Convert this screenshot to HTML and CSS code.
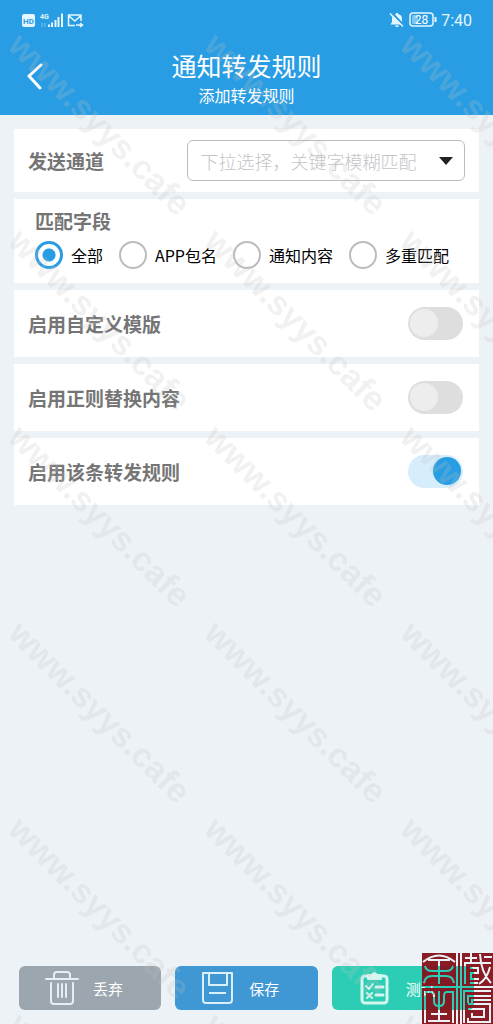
FILE: index.html
```
<!DOCTYPE html>
<html lang="zh-CN">
<head>
  <meta charset="UTF-8">
  <meta name="viewport" content="width=device-width, initial-scale=1">
  <title>通知转发规则</title>
  <link rel="stylesheet" href="styles.css">
</head>
<body>
<header class="header">
  <div class="status-bar">
    <svg class="status-left" width="64" height="18" viewBox="0 0 64 18" aria-hidden="true">
      <rect x="1" y="3" width="13" height="13" rx="2" fill="#e4f6ff"/>
      <text x="7.500" y="12.500" class="hd" text-anchor="middle">HD</text>
      <text x="19" y="8" class="net">4G</text>
      <path d="M21 12v4M24 12v4" stroke="#7cc5f0" stroke-width="1"/>
      <path d="M28 13.500v2.500M31 11.500v4.500M34.500 9v7M37.500 6v10M41 2.500v13.500" stroke="#e4f6ff" stroke-width="2"/>
      <path d="M54 14.500h-6.500V4H60v6M47.500 4.500l6.300 5.500L60 4.500M55 14h6M59 12l2.500 2-2.500 2" fill="none" stroke="#e4f6ff" stroke-width="1.500"/>
    </svg>
    <div class="status-right">
      <svg width="16" height="18" viewBox="0 0 16 18" aria-hidden="true">
        <path d="M7 2h2v1c3 .5 4 2.500 4 5v3l1.500 2.500h-13L3 11V8c0-2.500 1-4.500 4-5zM6 14.500h4c-.5 2-3.500 2-4 0z" fill="#e4f6ff"/>
        <path d="M3 2l12 12.500" stroke="#299de3" stroke-width="2"/>
        <path d="M1 2.500l13 13" stroke="#e4f6ff" stroke-width="1.500"/>
      </svg>
      <svg width="28" height="18" viewBox="0 0 28 18" aria-hidden="true">
        <rect x="1" y="2" width="23" height="13" rx="3" fill="none" stroke="#e4f6ff" stroke-width="1.500"/>
        <rect x="3" y="4" width="6" height="9" rx="1" fill="#7cc5f0"/>
        <path d="M26.500 6v5" stroke="#e4f6ff" stroke-width="2"/>
        <text x="12.500" y="12.500" class="battery" text-anchor="middle">28</text>
      </svg>
      <span class="clock">7:40</span>
    </div>
  </div>
  <div class="title-bar">
    <button class="back" type="button" aria-label="返回">
      <svg width="18" height="28" viewBox="0 0 18 28"><path d="M15 2L3 13l11 12" fill="none" stroke="#fff" stroke-width="3" stroke-linecap="round" stroke-linejoin="round"/></svg>
    </button>
    <div class="titles">
      <h1 class="title">通知转发规则</h1>
      <p class="subtitle">添加转发规则</p>
    </div>
  </div>
</header>

<main class="content">
  <div class="card row">
    <label class="label" for="channel">发送通道</label>
    <div class="select-box">
      <select id="channel" class="select">
        <option>下拉选择，关键字模糊匹配</option>
      </select>
      <svg class="caret" width="14" height="8" viewBox="0 0 14 8" aria-hidden="true"><path d="M0 0h14L7 8z" fill="#222"/></svg>
    </div>
  </div>

  <fieldset class="card fields">
    <legend class="label legend">匹配字段</legend>
    <div class="radios">
      <label class="radio"><input type="radio" name="field" checked>全部</label>
      <label class="radio"><input type="radio" name="field">APP包名</label>
      <label class="radio"><input type="radio" name="field">通知内容</label>
      <label class="radio"><input type="radio" name="field">多重匹配</label>
    </div>
  </fieldset>

  <div class="card row">
    <label class="label" for="tpl">启用自定义模版</label>
    <input class="switch" type="checkbox" id="tpl">
  </div>
  <div class="card row">
    <label class="label" for="regex">启用正则替换内容</label>
    <input class="switch" type="checkbox" id="regex">
  </div>
  <div class="card row">
    <label class="label" for="enabled">启用该条转发规则</label>
    <input class="switch" type="checkbox" id="enabled" checked>
  </div>
</main>

<footer class="actions">
  <button class="btn btn-discard" type="button">
    <svg width="34" height="34" viewBox="0 0 34 34" fill="none" stroke="#e8edf2" stroke-width="2" stroke-linecap="round" stroke-linejoin="round">
      <path d="M1 8h32M9 7V4q0-3 3-3h10q3 0 3 3v3M6 12v18q0 3 3 3h16q3 0 3-3V12M13 13v13M17 13v13M21 13v13"/>
    </svg>
    丢弃
  </button>
  <button class="btn btn-save" type="button">
    <svg width="34" height="34" viewBox="0 0 34 34" fill="none" stroke="#d9effa" stroke-width="2" stroke-linejoin="round">
      <path d="M2 2h29v27q0 3-3 3H5q-3 0-3-3zM8 2v12h18V2M8 22h17"/>
    </svg>
    保存
  </button>
  <button class="btn btn-test" type="button">
    <svg width="34" height="34" viewBox="0 0 34 34" fill="none" stroke="#d5f7ef" stroke-width="2" stroke-linecap="round" stroke-linejoin="round">
      <rect x="4" y="5" width="25" height="27" rx="3" stroke-width="3"/>
      <path d="M10 8V4h4q2-4 5 0h4v4z" fill="#d5f7ef"/>
      <path d="M8 15l3 3 4-5M9 22l5 5M14 22l-5 5"/>
      <path d="M18 16h7M18 24h7" stroke-width="3"/>
    </svg>
    测试
  </button>
</footer>

<!-- watermark tiled over the page -->
<svg class="watermark" aria-hidden="true">
  <defs>
    <pattern id="wm" width="196" height="196" patternUnits="userSpaceOnUse">
      <text x="98" y="107" transform="rotate(45 98 98)" text-anchor="middle">www.syys.cafe</text>
    </pattern>
  </defs>
  <rect width="100%" height="100%" fill="url(#wm)"/>
</svg>

<!-- seal, the characters are cut out of the red -->
<svg class="seal" width="71" height="71" viewBox="0 0 71 71" aria-hidden="true">
  <mask id="cut">
    <rect width="71" height="71" fill="#fff"/>
    <g fill="none" stroke="#000" stroke-width="2">
      <path d="M35 0v71M39 0v71M0 34h71"/>
      <path d="M1 9Q17-4 33 9M6 7h22M17 7v24M3 13q1 5 7 5h14q6 0 7-5M2 30q1-7 8-7h14q7 0 8 7"/>
      <path d="M3 70V39h6q3 0 3 4v5q0 5 5 5t5-5v-5q0-4 3-4h6v31M17 38v30M9 61h16M6 68h22"/>
      <path d="M43 5h12M49 0v10M42 10h27M43 10v21M48 15h8v5h-7v6h8M48 30h8M58 1q1 19 11 29M68 14Q65 26 57 31M62 4h8"/>
      <path d="M42 70V38h27M46 50V43h23M50 50v-3h19M46 51h22v18H46v-4M46 56h16v8H50v-4"/>
    </g>
  </mask>
  <rect width="71" height="71" fill="#85131c" fill-opacity=".96" mask="url(#cut)"/>
</svg>
</body>
</html>
```

FILE: styles.css
```
* {
  box-sizing: border-box;
}
body {
  margin: 0;
  min-height: 100vh;
  display: flex;
  flex-direction: column;
  background: #edf2f6;
  font-family: "Noto Sans CJK SC", "Noto Sans", sans-serif;
}
button, select {
  font-family: inherit;
}

/* header */
.header {
  height: 115px;
  background: #299de3;
  color: #fff;
}
.status-bar {
  display: flex;
  justify-content: space-between;
  align-items: center;
  height: 40px;
  padding: 0 21px;
}
.status-right {
  display: flex;
  align-items: center;
  gap: 4px;
  color: #e4f6ff;
}
.clock {
  font: 16px Roboto, sans-serif;
}
.hd, .net, .battery {
  font-family: Roboto, sans-serif;
}
.hd {
  font-size: 8px;
  font-weight: 700;
  fill: #299de3;
}
.net {
  font-size: 7px;
  font-weight: 700;
  fill: #e4f6ff;
}
.battery {
  font-size: 12px;
  fill: #fff;
}
.title-bar {
  display: grid;
  grid-template-columns: 48px 1fr 48px;
  align-items: center;
  height: 73px;
}
.back {
  justify-self: end;
  margin-right: 4px;
  padding: 0;
  border: none;
  background: none;
  cursor: pointer;
}
.back svg {
  display: block;
}
.titles {
  text-align: center;
}
.title {
  margin: 0;
  font-size: 25px;
  font-weight: 400;
  line-height: 36px;
}
.subtitle {
  margin: 0;
  font-size: 16px;
  line-height: 24px;
}

/* cards */
.content {
  display: flex;
  flex-direction: column;
  gap: 7px;
  padding: 14px;
}
.card {
  margin: 0;
  border: none;
  background: #fff;
}
.row {
  display: flex;
  justify-content: space-between;
  align-items: center;
  padding: 11px 16px 11px 14px;
}
.label {
  color: #757575;
  font-size: 19px;
  font-weight: 600;
  line-height: 28px;
}
.select-box {
  display: grid;
  align-items: center;
  width: 64%;
  margin-right: -2px;
}
.select, .caret {
  grid-area: 1 / 1;
}
.select {
  appearance: none;
  width: 100%;
  height: 41px;
  padding: 0 32px 0 13px;
  border: 1px solid #bbb;
  border-radius: 6px;
  background: #fff;
  color: #c4c4c8;
  font-size: 18px;
  font-weight: 300;
}
.caret {
  justify-self: end;
  margin-right: 12px;
  pointer-events: none;
}
.fields {
  min-width: 0;
  padding: 8px 14px 14px 21px;
}
.legend {
  float: left;
  width: 100%;
  padding: 0;
}
.radios {
  clear: both;
  display: flex;
  gap: 16px;
  padding-top: 6px;
}
.radio {
  display: flex;
  align-items: center;
  gap: 8px;
  color: #000;
  font-size: 16px;
  line-height: 28px;
  white-space: nowrap;
}
.radio input {
  appearance: none;
  flex: none;
  width: 28px;
  height: 28px;
  margin: 0;
  border: 2px solid #bbbcbe;
  border-radius: 50%;
}
.radio input:checked {
  border: 3px solid #299de3;
  background: radial-gradient(circle, #299de3 6px, #fff 7px);
}
.switch {
  appearance: none;
  width: 55px;
  height: 33px;
  margin: 6px 0;
  border-radius: 17px;
  background: #dedede;
}
.switch::before {
  content: "";
  display: block;
  width: 28px;
  height: 28px;
  margin: 2px;
  border-radius: 50%;
  background: #ededed;
}
.switch:checked {
  background: #d6edfb;
}
.switch:checked::before {
  margin-left: 25px;
  background: #299de3;
}

/* bottom buttons */
.actions {
  display: flex;
  gap: 14px;
  margin-top: auto;
  padding: 14px 19px;
}
.btn {
  flex: 1;
  display: flex;
  align-items: center;
  gap: 14px;
  height: 44px;
  padding: 0 0 0 26px;
  border: none;
  border-radius: 6px;
  color: #fff;
  font-size: 15px;
  cursor: pointer;
}
.btn-discard {
  background: #9ca6ae;
}
.btn-save {
  background: #3f98d3;
}
.btn-test {
  background: #2bceb4;
}

.watermark {
  position: absolute;
  top: 28px;
  left: 0;
  width: 100%;
  height: calc(100% - 28px);
  pointer-events: none;
}
.watermark text {
  font: bold 34px "Liberation Sans", sans-serif;
  fill: #bebebe;
  fill-opacity: .22;
}
.seal {
  position: fixed;
  right: 0;
  bottom: 0;
  pointer-events: none;
}
```
